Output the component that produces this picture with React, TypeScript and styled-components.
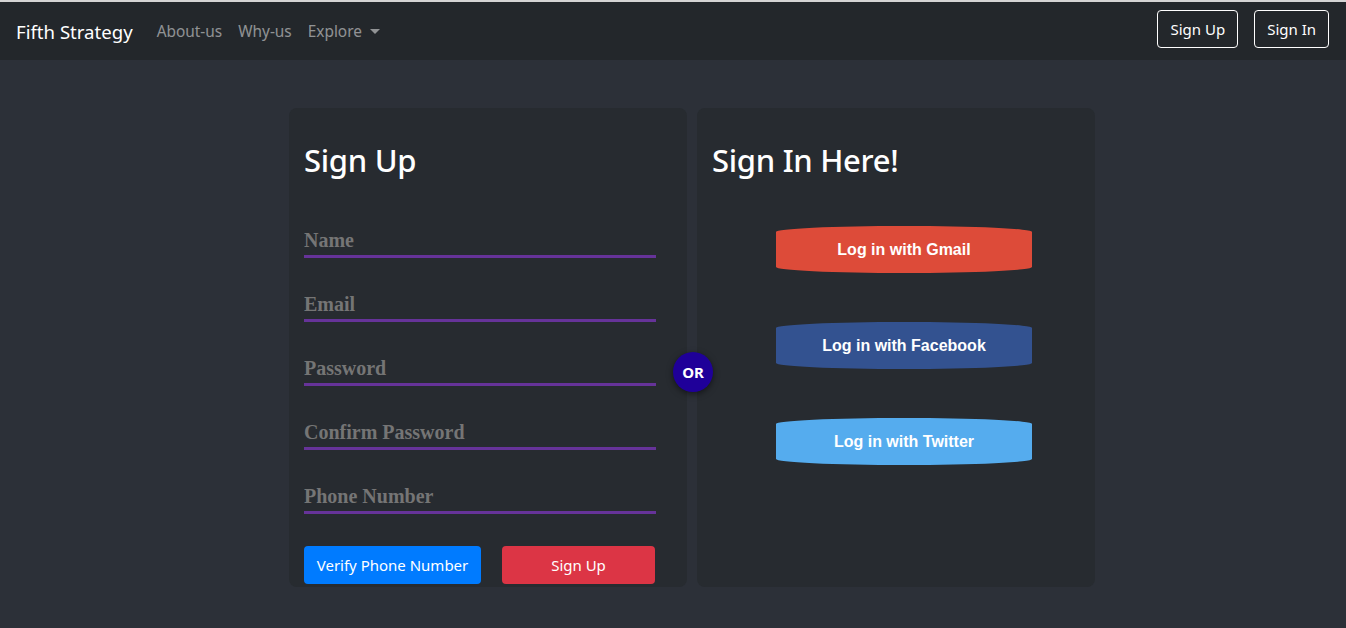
import React from "react";
import styled, { createGlobalStyle } from "styled-components";

const GlobalStyle = createGlobalStyle`
  html, body {
    margin: 0;
    padding: 0;
    background: #2c3038;
    font-family: "Noto Sans", "Open Sans", sans-serif;
  }
  * { box-sizing: border-box; }
`;

const Page = styled.div`
  min-height: 628px;
  background: #2c3038;
  border-top: 2px solid #d4d4d4;
`;

const Navbar = styled.nav`
  height: 58px;
  background: #23272b;
  display: flex;
  align-items: center;
  padding: 0 17px 0 16px;
`;

const Brand = styled.a`
  color: #ffffff;
  font-size: 18.6px;
  margin-right: 16px;
  text-decoration: none;
  white-space: nowrap;
`;

const NavLinks = styled.div`
  display: flex;
  align-items: center;
  flex: 1;
`;

const NavLink = styled.a`
  color: rgba(255, 255, 255, 0.5);
  font-size: 15.4px;
  padding: 8px 8px;
  text-decoration: none;
  display: flex;
  align-items: center;
`;

const Caret = styled.span`
  display: inline-block;
  margin-left: 8px;
  border-top: 5px solid rgba(255, 255, 255, 0.5);
  border-left: 5px solid transparent;
  border-right: 5px solid transparent;
`;

const NavActions = styled.div`
  display: flex;
  gap: 16px;
  margin-bottom: 4px;
`;

const OutlineButton = styled.button`
  background: transparent;
  color: #ffffff;
  border: 1px solid #ffffff;
  border-radius: 4px;
  height: 38px;
  padding: 0 12px;
  font-family: inherit;
  font-size: 15px;
`;

const Stage = styled.main`
  padding: 48px 0 0 289px;
`;

const Cards = styled.div`
  position: relative;
  display: flex;
  gap: 10px;
  width: 806px;
`;

const Card = styled.section`
  width: 398px;
  height: 479px;
  background: #272b30;
  border-radius: 8px;
  padding: 33px 15px 3px;
  display: flex;
  flex-direction: column;
`;

const Heading = styled.h2`
  margin: 0;
  color: #ffffff;
  font-size: 31px;
  font-weight: 500;
  line-height: 38px;
  letter-spacing: -0.3px;
`;

const Fields = styled.div`
  margin-top: 41px;
  display: flex;
  flex-direction: column;
  gap: 26px;
`;

const Field = styled.input`
  width: 352px;
  height: 38px;
  padding: 6px 0 0 0;
  background: transparent;
  border: none;
  border-bottom: 3px solid #663399;
  outline: none;
  color: #cccccc;
  font-family: "Liberation Serif", "Times New Roman", serif;
  font-weight: bold;
  font-size: 20px;
  &::placeholder {
    color: #757575;
    opacity: 1;
  }
`;

const ButtonRow = styled.div`
  margin-top: 32px;
  display: flex;
  gap: 21px;
`;

const SolidButton = styled.button<{ $bg: string; $w: number }>`
  width: ${(p) => p.$w}px;
  height: 38px;
  border: none;
  border-radius: 4px;
  background: ${(p) => p.$bg};
  color: #ffffff;
  font-family: inherit;
  font-size: 15px;
  padding: 0;
`;

const Socials = styled.div`
  margin-top: 47px;
  padding-left: 64px;
  display: flex;
  flex-direction: column;
  gap: 49px;
`;

const SocialButton = styled.button<{ $bg: string }>`
  width: 256px;
  height: 47px;
  border: none;
  border-radius: 50% / 6px;
  background: ${(p) => p.$bg};
  color: #ffffff;
  font-family: "Liberation Sans", Arial, sans-serif;
  font-weight: bold;
  font-size: 16px;
`;

const OrBadge = styled.div`
  position: absolute;
  left: 384px;
  top: 244px;
  width: 40px;
  height: 40px;
  border-radius: 50%;
  background: #1f0099;
  color: #ffffff;
  font-weight: bold;
  font-size: 15px;
  display: flex;
  align-items: center;
  justify-content: center;
  box-shadow: 0 2px 6px rgba(0, 0, 0, 0.5);
`;

export default function App() {
  return (
    <Page>
      <GlobalStyle />
      <Navbar>
        <Brand href="#">Fifth Strategy</Brand>
        <NavLinks>
          <NavLink href="#">About-us</NavLink>
          <NavLink href="#">Why-us</NavLink>
          <NavLink href="#">
            Explore
            <Caret />
          </NavLink>
        </NavLinks>
        <NavActions>
          <OutlineButton>Sign Up</OutlineButton>
          <OutlineButton>Sign In</OutlineButton>
        </NavActions>
      </Navbar>
      <Stage>
        <Cards>
          <Card>
            <Heading>Sign Up</Heading>
            <Fields>
              <Field placeholder="Name" />
              <Field placeholder="Email" />
              <Field placeholder="Password" type="password" />
              <Field placeholder="Confirm Password" type="password" />
              <Field placeholder="Phone Number" />
            </Fields>
            <ButtonRow>
              <SolidButton $bg="#007bff" $w={177}>
                Verify Phone Number
              </SolidButton>
              <SolidButton $bg="#dc3545" $w={153}>
                Sign Up
              </SolidButton>
            </ButtonRow>
          </Card>
          <Card>
            <Heading>Sign In Here!</Heading>
            <Socials>
              <SocialButton $bg="#dd4b39">Log in with Gmail</SocialButton>
              <SocialButton $bg="#335290">Log in with Facebook</SocialButton>
              <SocialButton $bg="#55acee">Log in with Twitter</SocialButton>
            </Socials>
          </Card>
          <OrBadge>OR</OrBadge>
        </Cards>
      </Stage>
    </Page>
  );
}
